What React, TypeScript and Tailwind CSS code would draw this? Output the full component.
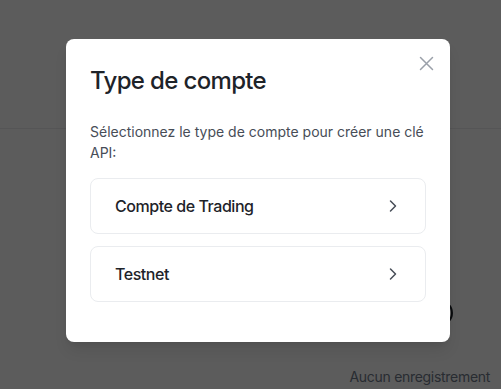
import React from "react";

export default function App() {
  return (
    <div className="relative w-[501px] h-[389px] overflow-hidden bg-white" style={{ fontFamily: "Inter, 'Noto Sans', sans-serif" }}>
      {/* background page */}
      <div className="h-[129px] border-b border-[#eaecef]" />
      <div className="flex flex-col items-end">
        <div className="mt-[171px] mr-[48px] w-[26px] h-[26px] rounded-full border-2 border-[#1e2329]" />
        <div className="mt-[41px] mr-[11px] text-[14px] leading-[20px] tracking-[-0.3px] text-[#707a8a]">Aucun enregistrement</div>
      </div>

      {/* overlay */}
      <div className="absolute inset-0 bg-black/[0.64] flex items-center justify-center pl-[15px] pb-[8px]">
        <div className="relative w-[384px] h-[303px] bg-white rounded-[8px] pt-[26px] px-[24px] shadow-lg">
          <button className="absolute left-[353px] top-[17px] w-[15px] h-[15px] flex items-center justify-center">
            <svg width="15" height="15" viewBox="0 0 15 15" fill="none" stroke="#9aa0a9" strokeWidth="1.5" strokeLinecap="round">
              <path d="M1.5 1.5 L13.5 13.5 M13.5 1.5 L1.5 13.5" />
            </svg>
          </button>
          <h2 className="text-[24px] leading-[32px] font-medium tracking-[-0.65px] text-[#1e2329]">Type de compte</h2>
          <p className="mt-[24px] text-[14px] leading-[21px] text-[#474d57]">
            Sélectionnez le type de compte pour créer une clé API:
          </p>
          <div className="mt-[15px] flex flex-col gap-[12px]">
            {["Compte de Trading", "Testnet"].map((t) => (
              <div
                key={t}
                className="h-[56px] rounded-[8px] border border-[#eaecef] flex items-center justify-between pl-[24px] pr-[22px]"
              >
                <span className="text-[16px] leading-[22px] font-medium tracking-[-0.45px] text-[#1e2329]">{t}</span>
                <svg width="20" height="20" viewBox="0 0 24 24" fill="none" stroke="#474d57" strokeWidth="1.8" strokeLinecap="round" strokeLinejoin="round">
                  <path d="m9 18 6-6-6-6" />
                </svg>
              </div>
            ))}
          </div>
        </div>
      </div>
    </div>
  );
}
